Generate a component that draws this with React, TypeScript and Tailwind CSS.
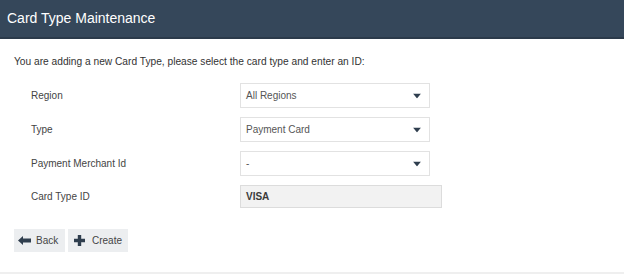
import React from "react";

function Arrow() {
  return (
    <svg width="8" height="5" viewBox="0 0 8 5" className="absolute right-[8px] top-1/2 -translate-y-1/2">
      <path d="M0 0 H8 L4 5 Z" fill="#2f3e4e" />
    </svg>
  );
}

function BackIcon() {
  return (
    <svg width="13" height="9" viewBox="0 0 13 9">
      <path d="M0 4.5 L5 0 V2.6 H13 V6.4 H5 V9 Z" fill="#2f3e4e" />
    </svg>
  );
}

function PlusIcon() {
  return (
    <svg width="11" height="11" viewBox="0 0 11 11">
      <path d="M3.8 0 H7.2 V3.8 H11 V7.2 H7.2 V11 H3.8 V7.2 H0 V3.8 H3.8 Z" fill="#2f3e4e" />
    </svg>
  );
}

function Select({ value }: { value: string }) {
  return (
    <div className="relative w-[190px] h-[25px] border border-[#e2e2e2] bg-white flex items-center pl-[5px] text-[10px] text-[#555]">
      {value}
      <Arrow />
    </div>
  );
}

function Row({ label, children }: { label: string; children: React.ReactNode }) {
  return (
    <div className="flex items-center">
      <div className="w-[209px] text-[10px] text-[#444]">{label}</div>
      {children}
    </div>
  );
}

export default function App() {
  return (
    <div className="w-[624px] h-[274px] bg-white flex flex-col font-['Liberation_Sans',Arial,sans-serif]">
      <div className="h-[39px] bg-[#35475a] border-b-2 border-[#2b3a4a] flex items-center pl-[7px] text-[14px] text-white shrink-0">
        Card Type Maintenance
      </div>
      <div className="flex flex-col pl-[14px] pt-[17px] flex-1">
        <div className="text-[10.2px] leading-[12px] text-[#333]">
          You are adding a new Card Type, please select the card type and enter an ID:
        </div>
        <div className="flex flex-col gap-[9px] mt-[15px] pl-[17px]">
          <Row label="Region">
            <Select value="All Regions" />
          </Row>
          <Row label="Type">
            <Select value="Payment Card" />
          </Row>
          <Row label="Payment Merchant Id">
            <Select value="-" />
          </Row>
          <Row label="Card Type ID">
            <div className="w-[202px] h-[23px] border border-[#dcdcdc] bg-[#f2f2f2] flex items-center pl-[5px] text-[10px] font-bold text-[#3a3a3a]">
              VISA
            </div>
          </Row>
        </div>
        <div className="flex gap-[3px] mt-[21px]">
          <div className="h-[23px] w-[51px] bg-[#eceef0] flex items-center pl-[4px] gap-[5px] text-[10px] text-[#444]">
            <BackIcon />
            Back
          </div>
          <div className="h-[23px] w-[60px] bg-[#eceef0] flex items-center pl-[6px] gap-[7px] text-[10px] text-[#444]">
            <PlusIcon />
            Create
          </div>
        </div>
      </div>
      <div className="h-[2px] bg-[#efefef] shrink-0" />
    </div>
  );
}
